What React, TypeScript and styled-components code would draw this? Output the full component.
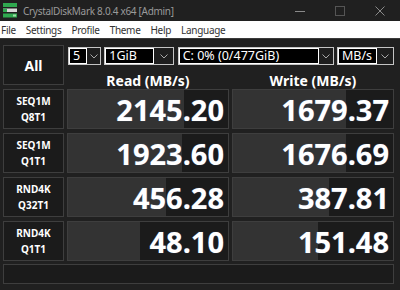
import React from "react";
import styled, { createGlobalStyle } from "styled-components";

const GlobalStyle = createGlobalStyle`
  html, body { margin: 0; padding: 0; background: #202020; }
  body { font-family: "Noto Sans", "DejaVu Sans", sans-serif; }
`;

const Window = styled.div`
  width: 400px;
  height: 290px;
  display: flex;
  flex-direction: column;
  background: #202020;
  overflow: hidden;
`;

const TitleBar = styled.div`
  height: 21px;
  display: flex;
  align-items: center;
  background: #202020;
  padding-left: 3px;
`;

const TitleText = styled.span`
  margin-left: 6px;
  font-size: 10px;
  letter-spacing: -0.3px;
  color: #9a9a9a;
  white-space: nowrap;
  flex: 1;
`;

const WinButton = styled.div`
  width: 40px;
  height: 21px;
  display: flex;
  align-items: center;
  justify-content: center;
`;

const MenuBar = styled.div`
  height: 17px;
  background: #ffffff;
  display: flex;
  align-items: center;
  gap: 10px;
  padding-left: 1px;
  border-bottom: 1px solid #3a3a3a;
`;

const MenuItem = styled.span`
  font-size: 10px;
  letter-spacing: -0.3px;
  color: #333;
  white-space: nowrap;
`;

const Body = styled.div`
  display: flex;
  flex-direction: column;
  gap: 4px;
  padding: 6px 6px 0 3px;
`;

const TopRow = styled.div`
  display: flex;
  gap: 3px;
  height: 40px;
`;

const Box = styled.div`
  box-sizing: border-box;
  border: 1px solid #3e3e3e;
  background: #1b1b1b;
`;

const AllButton = styled(Box)`
  width: 61px;
  height: 40px;
  display: flex;
  align-items: center;
  justify-content: center;
  color: #fff;
  font-weight: 700;
  font-size: 14px;
`;

const TopRight = styled.div`
  width: 327px;
  display: flex;
  flex-direction: column;
`;

const Controls = styled.div`
  display: flex;
  justify-content: space-between;
  padding-left: 1px;
  margin-top: 2px;
  height: 18px;
`;

const Select = styled.div<{ $w: number }>`
  box-sizing: border-box;
  width: ${(p) => p.$w}px;
  height: 18px;
  border: 1px solid #c4c4c4;
  display: flex;
  background: #1e1e1e;
`;

const SelectValue = styled.div`
  flex: 1;
  box-sizing: border-box;
  border: 1px solid #ffffff;
  background: #000;
  color: #fff;
  font-size: 12.5px;
  line-height: 14px;
  padding-left: 3px;
  white-space: nowrap;
  overflow: hidden;
`;

const SelectArrow = styled.div<{ $w: number }>`
  width: ${(p) => p.$w}px;
  display: flex;
  align-items: center;
  justify-content: center;
`;

const Headers = styled.div`
  display: flex;
  gap: 3px;
  margin-top: 7px;
`;

const Header = styled.div`
  width: 162px;
  text-align: center;
  color: #fff;
  font-weight: 700;
  font-size: 14px;
  line-height: 18px;
`;

const Row = styled.div`
  display: flex;
  gap: 3px;
  height: 40px;
`;

const Label = styled(Box)`
  width: 61px;
  display: flex;
  flex-direction: column;
  align-items: center;
  justify-content: center;
  color: #fff;
  font-weight: 700;
  font-size: 10px;
  line-height: 16px;
`;

const ValueCell = styled(Box)`
  width: 162px;
  display: grid;
  grid-template-areas: "stack";
  overflow: hidden;
`;

const Bar = styled.div`
  grid-area: stack;
  background: #333333;
  height: 100%;
`;

const ValueText = styled.div`
  grid-area: stack;
  align-self: center;
  justify-self: end;
  padding-right: 4px;
  color: #fff;
  font-weight: 700;
  font-size: 29px;
  line-height: 1;
  text-shadow: 0 0 1px rgba(120, 170, 255, 0.55);
`;

const StatusBar = styled(Box)`
  height: 20px;
  width: 391px;
  margin-top: -1px;
`;

const Chevron = () => (
  <svg width="8" height="5" viewBox="0 0 8 5">
    <path d="M0.5 0.5 L4 4 L7.5 0.5" fill="none" stroke="#a8a8a8" strokeWidth="1" />
  </svg>
);

const AppIcon = () => (
  <svg width="14" height="15" viewBox="0 0 14 15">
    <rect x="0" y="0" width="14" height="4" fill="#2fa84f" />
    <rect x="0" y="5.5" width="14" height="3.5" fill="#d8d8d8" />
    <rect x="0" y="5.5" width="4" height="3.5" fill="#2fa84f" />
    <rect x="0" y="10.5" width="14" height="4" fill="#2fa84f" />
    <rect x="10" y="11.5" width="3" height="2" fill="#9fe0a8" />
  </svg>
);

const rows = [
  { a: "SEQ1M", b: "Q8T1", r: 2145.2, w: 1679.37 },
  { a: "SEQ1M", b: "Q1T1", r: 1923.6, w: 1676.69 },
  { a: "RND4K", b: "Q32T1", r: 456.28, w: 387.81 },
  { a: "RND4K", b: "Q1T1", r: 48.1, w: 151.48 },
];

const barWidth = (v: number) => Math.max(0, Math.min(1, Math.log10(v * 10) / 6)) * 160;

export default function App() {
  return (
    <Window>
      <GlobalStyle />
      <TitleBar>
        <AppIcon />
        <TitleText>CrystalDiskMark 8.0.4 x64 [Admin]</TitleText>
        <WinButton>
          <svg width="10" height="10" viewBox="0 0 10 10">
            <path d="M0 5.5 H10" stroke="#8a8a8a" strokeWidth="1" />
          </svg>
        </WinButton>
        <WinButton>
          <svg width="10" height="10" viewBox="0 0 10 10">
            <rect x="0.5" y="0.5" width="9" height="9" fill="none" stroke="#555" strokeWidth="1" />
          </svg>
        </WinButton>
        <WinButton>
          <svg width="10" height="10" viewBox="0 0 10 10">
            <path d="M0.5 0.5 L9.5 9.5 M9.5 0.5 L0.5 9.5" stroke="#8a8a8a" strokeWidth="1" />
          </svg>
        </WinButton>
      </TitleBar>
      <MenuBar>
        {["File", "Settings", "Profile", "Theme", "Help", "Language"].map((m) => (
          <MenuItem key={m}>{m}</MenuItem>
        ))}
      </MenuBar>
      <Body>
        <TopRow>
          <AllButton>All</AllButton>
          <TopRight>
            <Controls>
              <Select $w={33}>
                <SelectValue>5</SelectValue>
                <SelectArrow $w={13}><Chevron /></SelectArrow>
              </Select>
              <Select $w={70}>
                <SelectValue>1GiB</SelectValue>
                <SelectArrow $w={19}><Chevron /></SelectArrow>
              </Select>
              <Select $w={156}>
                <SelectValue>C: 0% (0/477GiB)</SelectValue>
                <SelectArrow $w={14}><Chevron /></SelectArrow>
              </Select>
              <Select $w={57}>
                <SelectValue>MB/s</SelectValue>
                <SelectArrow $w={16}><Chevron /></SelectArrow>
              </Select>
            </Controls>
            <Headers>
              <Header>Read (MB/s)</Header>
              <Header>Write (MB/s)</Header>
            </Headers>
          </TopRight>
        </TopRow>
        {rows.map((row, i) => (
          <Row key={i}>
            <Label>
              <span>{row.a}</span>
              <span>{row.b}</span>
            </Label>
            <ValueCell>
              <Bar style={{ width: barWidth(row.r) }} />
              <ValueText>{row.r.toFixed(2)}</ValueText>
            </ValueCell>
            <ValueCell>
              <Bar style={{ width: barWidth(row.w) }} />
              <ValueText>{row.w.toFixed(2)}</ValueText>
            </ValueCell>
          </Row>
        ))}
        <StatusBar />
      </Body>
    </Window>
  );
}
